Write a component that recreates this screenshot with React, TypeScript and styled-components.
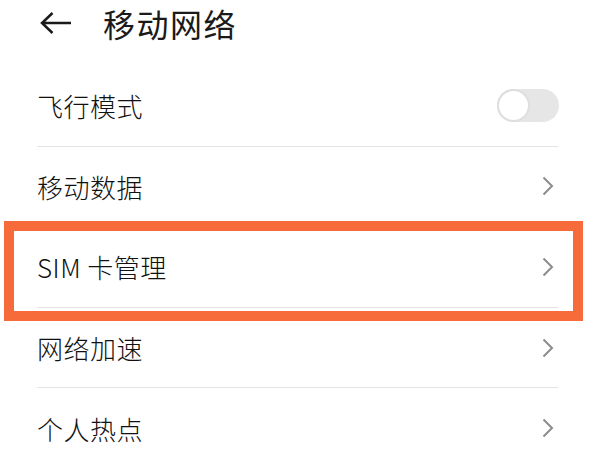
import styled, { createGlobalStyle } from "styled-components";

const GlobalStyle = createGlobalStyle`
  html, body {
    margin: 0;
    padding: 0;
    background: #ffffff;
  }
  body {
    font-family: "Noto Sans CJK SC", "Noto Sans", sans-serif;
    color: #1a1a1a;
  }
`;

const Page = styled.div`
  width: 607px;
  height: 465px;
  overflow: hidden;
  padding: 0 49px 0 37px;
  box-sizing: border-box;
`;

const Header = styled.header`
  height: 46px;
  display: flex;
  align-items: center;
  gap: 32px;
  padding-left: 3px;
  margin-bottom: 20px;
`;

const BackButton = styled.button`
  border: 0;
  background: none;
  padding: 0;
  display: flex;
  align-items: center;
  cursor: pointer;
`;

const Title = styled.h1`
  margin: 0;
  font-size: 32px;
  font-weight: 400;
  letter-spacing: 1.5px;
  color: #1a1a1a;
`;

const List = styled.ul`
  list-style: none;
  margin: 0;
  padding: 0;
`;

const Row = styled.li<{ $last?: boolean }>`
  position: relative;
  height: 79.6px;
  display: flex;
  align-items: center;
  justify-content: space-between;
  border-bottom: ${(p) => (p.$last ? "none" : "1px solid #e3e3e3")};
`;

const Label = styled.span`
  font-size: 26px;
  font-weight: 300;
  letter-spacing: 0.5px;
  color: #111111;
`;

const Highlight = styled.div`
  position: absolute;
  left: -33px;
  right: -25px;
  top: -6px;
  bottom: -14px;
  border: 10px solid #f76b3a;
  pointer-events: none;
`;

const Toggle = styled.div`
  width: 62px;
  height: 33px;
  border-radius: 17px;
  background: #e6e6e6;
  display: flex;
  align-items: center;
  margin-right: -1px;
`;

const Knob = styled.div`
  width: 33px;
  height: 33px;
  border-radius: 50%;
  background: #ffffff;
  border: 2px solid #dedede;
  box-sizing: border-box;
`;

const ChevronWrap = styled.span`
  display: flex;
  margin-right: 4px;
`;

function Chevron() {
  return (
    <ChevronWrap>
      <svg width="12" height="20" viewBox="0 0 12 20">
        <path d="M1.5 1.5 L10 10 L1.5 18.5" fill="none" stroke="#8c8c8c" strokeWidth="2" />
      </svg>
    </ChevronWrap>
  );
}

const items = [
  { label: "移动数据" },
  { label: "SIM 卡管理", marked: true },
  { label: "网络加速" },
  { label: "个人热点" },
];

export default function App() {
  return (
    <Page>
      <GlobalStyle />
      <Header>
        <BackButton>
          <svg width="31" height="22" viewBox="0 0 31 22">
            <path
              d="M31 11 H2.5 M12.5 1 L2 11 L12.5 21"
              fill="none"
              stroke="#1a1a1a"
              strokeWidth="2.5"
            />
          </svg>
        </BackButton>
        <Title>移动网络</Title>
      </Header>
      <List>
        <Row>
          <Label>飞行模式</Label>
          <Toggle>
            <Knob />
          </Toggle>
        </Row>
        {items.map((it, i) => (
          <Row key={it.label} $last={i === items.length - 1}>
            <Label>{it.label}</Label>
            <Chevron />
            {it.marked ? <Highlight /> : null}
          </Row>
        ))}
      </List>
    </Page>
  );
}
